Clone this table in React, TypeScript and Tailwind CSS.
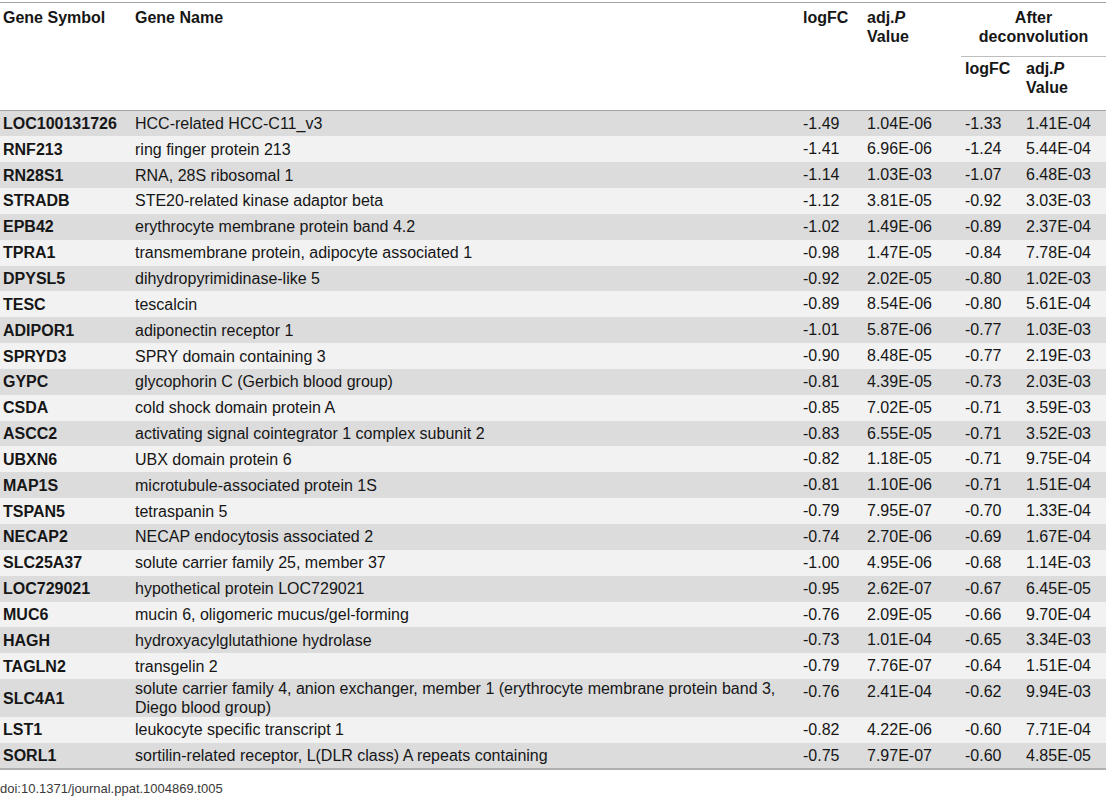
const rows: [string, string, string, string, string, string][] = [
  ["LOC100131726", "HCC-related HCC-C11_v3", "-1.49", "1.04E-06", "-1.33", "1.41E-04"],
  ["RNF213", "ring finger protein 213", "-1.41", "6.96E-06", "-1.24", "5.44E-04"],
  ["RN28S1", "RNA, 28S ribosomal 1", "-1.14", "1.03E-03", "-1.07", "6.48E-03"],
  ["STRADB", "STE20-related kinase adaptor beta", "-1.12", "3.81E-05", "-0.92", "3.03E-03"],
  ["EPB42", "erythrocyte membrane protein band 4.2", "-1.02", "1.49E-06", "-0.89", "2.37E-04"],
  ["TPRA1", "transmembrane protein, adipocyte associated 1", "-0.98", "1.47E-05", "-0.84", "7.78E-04"],
  ["DPYSL5", "dihydropyrimidinase-like 5", "-0.92", "2.02E-05", "-0.80", "1.02E-03"],
  ["TESC", "tescalcin", "-0.89", "8.54E-06", "-0.80", "5.61E-04"],
  ["ADIPOR1", "adiponectin receptor 1", "-1.01", "5.87E-06", "-0.77", "1.03E-03"],
  ["SPRYD3", "SPRY domain containing 3", "-0.90", "8.48E-05", "-0.77", "2.19E-03"],
  ["GYPC", "glycophorin C (Gerbich blood group)", "-0.81", "4.39E-05", "-0.73", "2.03E-03"],
  ["CSDA", "cold shock domain protein A", "-0.85", "7.02E-05", "-0.71", "3.59E-03"],
  ["ASCC2", "activating signal cointegrator 1 complex subunit 2", "-0.83", "6.55E-05", "-0.71", "3.52E-03"],
  ["UBXN6", "UBX domain protein 6", "-0.82", "1.18E-05", "-0.71", "9.75E-04"],
  ["MAP1S", "microtubule-associated protein 1S", "-0.81", "1.10E-06", "-0.71", "1.51E-04"],
  ["TSPAN5", "tetraspanin 5", "-0.79", "7.95E-07", "-0.70", "1.33E-04"],
  ["NECAP2", "NECAP endocytosis associated 2", "-0.74", "2.70E-06", "-0.69", "1.67E-04"],
  ["SLC25A37", "solute carrier family 25, member 37", "-1.00", "4.95E-06", "-0.68", "1.14E-03"],
  ["LOC729021", "hypothetical protein LOC729021", "-0.95", "2.62E-07", "-0.67", "6.45E-05"],
  ["MUC6", "mucin 6, oligomeric mucus/gel-forming", "-0.76", "2.09E-05", "-0.66", "9.70E-04"],
  ["HAGH", "hydroxyacylglutathione hydrolase", "-0.73", "1.01E-04", "-0.65", "3.34E-03"],
  ["TAGLN2", "transgelin 2", "-0.79", "7.76E-07", "-0.64", "1.51E-04"],
  [
    "SLC4A1",
    "solute carrier family 4, anion exchanger, member 1 (erythrocyte membrane protein band 3, Diego blood group)",
    "-0.76",
    "2.41E-04",
    "-0.62",
    "9.94E-03",
  ],
  ["LST1", "leukocyte specific transcript 1", "-0.82", "4.22E-06", "-0.60", "7.71E-04"],
  ["SORL1", "sortilin-related receptor, L(DLR class) A repeats containing", "-0.75", "7.97E-07", "-0.60", "4.85E-05"],
];

export default function App() {
  return (
    <div className="w-[1108px] h-[800px] bg-white pt-[2px] font-['Liberation_Sans',Arial,sans-serif] text-[16px] text-[#161616]">
      <table className="w-[1106px] table-fixed border-collapse border-t border-[#a3a3a3]">
        <colgroup>
          <col className="w-[130px]" />
          <col className="w-[669px]" />
          <col className="w-[63px]" />
          <col className="w-[99px]" />
          <col className="w-[60px]" />
          <col className="w-[85px]" />
        </colgroup>
        <thead className="border-b border-[#a3a3a3]">
          <tr className="h-[54px] bg-white leading-[19px]">
            <th rowSpan={2} className="align-top text-left font-bold pl-[3px] pt-[5px]">
              Gene Symbol
            </th>
            <th rowSpan={2} className="align-top text-left font-bold pl-[5px] pt-[5px]">
              Gene Name
            </th>
            <th rowSpan={2} className="align-top text-left font-bold pl-[4px] pt-[5px]">
              logFC
            </th>
            <th rowSpan={2} className="align-top text-left font-bold pl-[5px] pt-[5px]">
              adj.<i>P</i>
              <br />
              Value
            </th>
            <th colSpan={2} className="align-top text-center font-bold pt-[5px] border-b border-[#bdbdbd]">
              After
              <br />
              deconvolution
            </th>
          </tr>
          <tr className="h-[54px] bg-white leading-[19px]">
            <th className="align-top text-left font-bold pl-[4px] pt-[2px]">logFC</th>
            <th className="align-top text-left font-bold pl-[5px] pt-[2px]">
              adj.<i>P</i>
              <br />
              Value
            </th>
          </tr>
        </thead>
        <tbody className="border-b-2 border-[#b0b0b0]">
          {rows.map((r, i) => (
            <tr key={r[0]} className={i % 2 === 0 ? "bg-[#dcdcdd]" : "bg-[#f2f2f2]"}>
              <td className="h-[25.85px] py-0 pl-[3px] leading-[19px] font-bold align-middle">{r[0]}</td>
              <td className="h-[25.85px] py-0 pl-[5px] pr-[8px] leading-[19px] align-middle">{r[1]}</td>
              <td className="h-[25.85px] py-0 pl-[4px] leading-[19px] align-top pt-[3px]">{r[2]}</td>
              <td className="h-[25.85px] py-0 pl-[5px] leading-[19px] align-top pt-[3px]">{r[3]}</td>
              <td className="h-[25.85px] py-0 pl-[4px] leading-[19px] align-top pt-[3px]">{r[4]}</td>
              <td className="h-[25.85px] py-0 pl-[5px] leading-[19px] align-top pt-[3px]">{r[5]}</td>
            </tr>
          ))}
        </tbody>
      </table>
      <div className="mt-[11px] text-[13px] leading-[16px] text-[#3a3a3a]">doi:10.1371/journal.ppat.1004869.t005</div>
    </div>
  );
}
